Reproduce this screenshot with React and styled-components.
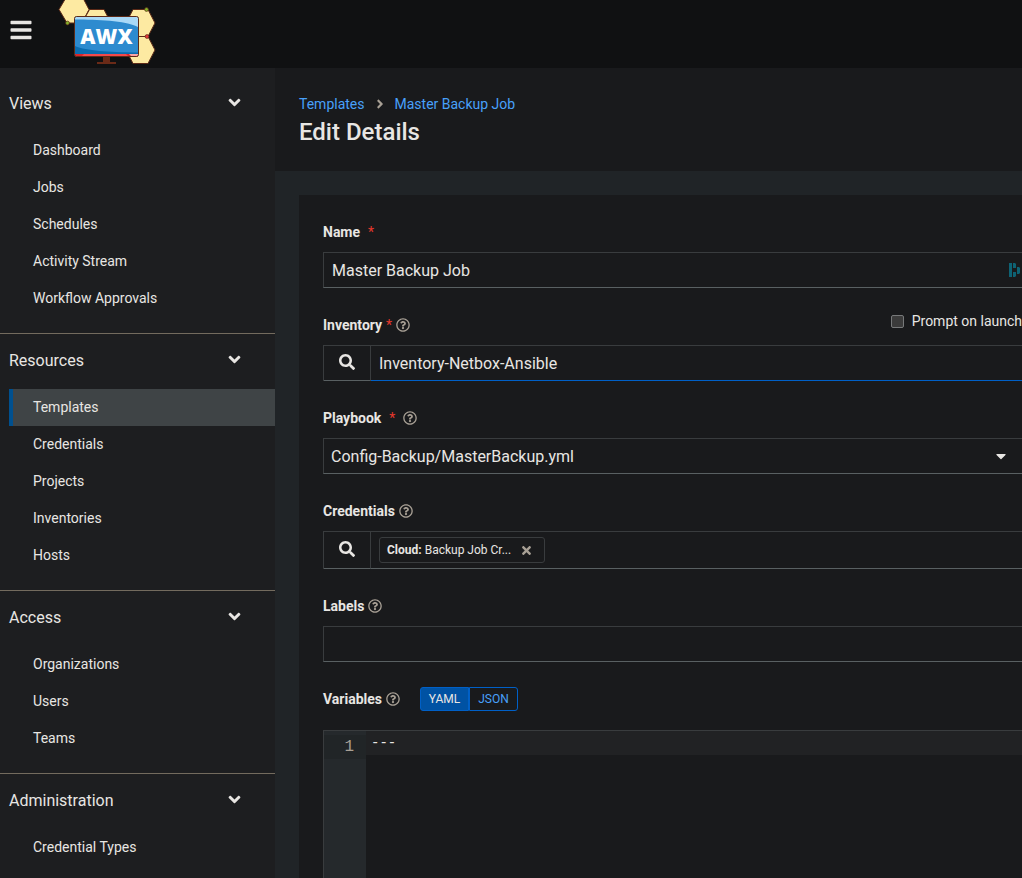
import styled, { createGlobalStyle, ThemeProvider } from "styled-components";
import {
  FaBars,
  FaAngleDown,
  FaAngleRight,
  FaSearch,
  FaRegQuestionCircle,
  FaCaretDown,
  FaTimes,
} from "react-icons/fa";

const theme = {
  colors: {
    header: "#101112",
    sidebar: "#1d1e20",
    panel: "#191a1c",
    page: "#202427",
    text: "#e8e6e3",
    muted: "#a8a095",
    link: "#48a0fa",
    primary: "#0060c7",
    primaryFill: "#0052a3",
    active: "#3f4446",
    activeBar: "#00508f",
    divider: "#736b5e",
    border: "#393c3e",
    borderBottom: "#596062",
    required: "#e5382c",
  },
};

const GlobalStyle = createGlobalStyle`
  * {
    box-sizing: border-box;
  }

  body {
    margin: 0;
    background-color: #202427;
    color: #e8e6e3;
    font-family: Roboto, sans-serif;
    font-size: 14px;
  }

  button, input, select, textarea {
    font-family: inherit;
    color: inherit;
  }
`;

const Page = styled.div`
  display: flex;
  flex-direction: column;
  height: 100vh;
  overflow: hidden;
`;

const Header = styled.header`
  display: flex;
  flex: none;
  align-items: center;
  gap: 17px;
  height: 68px;
  padding-left: 9px;
  background-color: ${({ theme }) => theme.colors.header};

  svg {
    display: block;
  }
`;

const MenuButton = styled.button`
  padding: 0;
  border: 0;
  background: none;
  font-size: 24px;
  line-height: 24px;
  cursor: pointer;

  svg {
    margin-bottom: 8px;
  }
`;

const Body = styled.div`
  display: flex;
  flex: 1;
  min-height: 0;
`;

const Sidebar = styled.nav`
  flex: none;
  width: 275px;
  padding-top: 9px;
  overflow: hidden;
  background-color: ${({ theme }) => theme.colors.sidebar};
`;

const NavSection = styled.section`
  padding: 0 0 16px 9px;
  border-bottom: 1px solid ${({ theme }) => theme.colors.divider};

  ul {
    margin: 0;
    padding: 0;
    list-style: none;
  }
`;

const NavToggle = styled.button`
  display: flex;
  align-items: center;
  justify-content: space-between;
  width: 100%;
  height: 55px;
  padding: 0 31px 2px 0;
  border: 0;
  background: none;
  font-size: 16px;
  cursor: pointer;

  svg {
    margin-bottom: 2px;
    font-size: 19px;
  }
`;

const NavLink = styled.a`
  display: block;
  height: 37px;
  padding-left: 20px;
  border-left: 4px solid ${({ theme, $active }) => ($active ? theme.colors.activeBar : "transparent")};
  background-color: ${({ theme, $active }) => ($active ? theme.colors.active : "transparent")};
  color: inherit;
  line-height: 36px;
  text-decoration: none;
`;

const Main = styled.main`
  display: flex;
  flex: 1;
  flex-direction: column;
  min-width: 0;
`;

const PageHead = styled.div`
  height: 103px;
  padding: 24px;
  background-color: ${({ theme }) => theme.colors.panel};

  h1 {
    margin: 0;
    font-size: 24px;
    font-weight: 500;
    line-height: 32px;
  }
`;

const Breadcrumb = styled.nav`
  display: flex;
  align-items: center;
  gap: 8px;
  line-height: 24px;

  a {
    color: ${({ theme }) => theme.colors.link};
    text-decoration: none;
  }

  svg {
    color: ${({ theme }) => theme.colors.muted};
  }
`;

const Card = styled.form`
  display: flex;
  flex: 1;
  flex-direction: column;
  gap: 25px;
  min-height: 0;
  margin: 24px 0 0 24px;
  padding: 25px 0 0 24px;
  background-color: ${({ theme }) => theme.colors.panel};
`;

const Group = styled.div`
  display: flex;
  flex: ${({ $grow }) => ($grow ? 1 : "none")};
  flex-direction: column;
  gap: ${({ $grow }) => ($grow ? 19 : 8)}px;
  min-height: 0;
`;

const LabelRow = styled.div`
  display: flex;
  align-items: center;
  gap: 4px;
  height: 24px;

  label {
    font-weight: 700;
  }
`;

const Required = styled.span`
  padding: 0 ${({ $tight }) => ($tight ? 0 : 4)}px;
  color: ${({ theme }) => theme.colors.required};
`;

const HelpButton = styled.button`
  display: flex;
  padding: 0;
  border: 0;
  background: none;
  color: ${({ theme }) => theme.colors.muted};
  font-size: 14px;
  cursor: pointer;
`;

const Prompt = styled.label`
  display: flex;
  align-self: flex-start;
  align-items: center;
  gap: 8px;
  margin-left: auto;
  line-height: 16px;

  && {
    font-weight: 400;
  }

  input {
    appearance: none;
    width: 13px;
    height: 13px;
    margin: 0;
    border: 1px solid #77797a;
    border-radius: 2px;
    background-color: #3b3b3b;
  }
`;

const Field = styled.div`
  display: flex;
  align-items: center;
  height: 36px;
  border: 1px solid ${({ theme }) => theme.colors.border};
  border-right: 0;
  border-bottom-color: ${({ theme }) => theme.colors.borderBottom};

  > svg {
    flex: none;
  }
`;

const TextInput = styled.input`
  flex: 1;
  align-self: stretch;
  min-width: 0;
  padding: 0 8px;
  border: 0;
  outline: 0;
  background: none;
  font-size: 16px;
`;

const LookupField = styled.div`
  display: flex;
  height: ${({ $tall }) => ($tall ? 38 : 36)}px;
  border: 1px solid ${({ theme }) => theme.colors.border};
  border-width: 1px 0 0 1px;
`;

const LookupValue = styled.div`
  display: flex;
  flex: 1;
  align-items: center;
  min-width: 0;
  border-bottom: 1px solid ${({ theme, $focused }) => ($focused ? theme.colors.primary : theme.colors.borderBottom)};
`;

const SearchButton = styled.button`
  display: flex;
  align-items: center;
  justify-content: center;
  width: 47px;
  padding: 0 0 2px;
  border: 1px solid ${({ theme }) => theme.colors.border};
  border-width: 0 1px 1px 0;
  border-bottom-color: ${({ theme }) => theme.colors.borderBottom};
  background: none;
  font-size: 16px;
  cursor: pointer;
`;

const Select = styled.select`
  appearance: none;
  flex: 1;
  align-self: stretch;
  padding: 0 7px;
  border: 0;
  background: none;
  font-size: 16px;
`;

const SelectCaret = styled(FaCaretDown)`
  margin-right: 13px;
  font-size: 16px;
`;

const Chip = styled.span`
  display: flex;
  align-items: center;
  gap: 9px;
  height: 26px;
  margin-left: 8px;
  padding: 0 11px 0 7px;
  border: 1px solid ${({ theme }) => theme.colors.border};
  border-radius: 3px;
  font-size: 12px;

  b {
    font-weight: 700;
  }

  button {
    display: flex;
    padding: 0;
    border: 0;
    background: none;
    color: ${({ theme }) => theme.colors.muted};
    font-size: 13px;
  }
`;

const Toggle = styled.div`
  display: flex;
  margin-left: 16px;
`;

const ToggleButton = styled.button`
  width: 49px;
  height: 24px;
  padding: 0;
  border: 1px solid ${({ theme }) => theme.colors.primary};
  border-radius: ${({ $selected }) => ($selected ? "3px 0 0 3px" : "0 3px 3px 0")};
  background-color: ${({ theme, $selected }) => ($selected ? theme.colors.primaryFill : "transparent")};
  color: ${({ theme, $selected }) => ($selected ? theme.colors.text : theme.colors.link)};
  font-size: 12px;
`;

const Editor = styled.div`
  display: flex;
  flex: 1;
  min-height: 0;
  border: 1px solid ${({ theme }) => theme.colors.border};
  border-width: 1px 0 0 1px;
  font-family: "Liberation Mono", monospace;

  textarea {
    flex: 1;
    padding: 0 5px;
    border: 0;
    outline: 0;
    resize: none;
    background: linear-gradient(#212224 24px, transparent 24px);
    font-family: inherit;
    font-size: 14px;
    line-height: 24px;
  }
`;

const Gutter = styled.div`
  width: 42px;
  padding-top: 4px;
  background-color: #25292c;

  span {
    display: block;
    padding-right: 12px;
    background-color: #212527;
    color: ${({ theme }) => theme.colors.muted};
    font-size: 16px;
    line-height: 24px;
    text-align: right;
  }
`;

const sections = [
  { title: "Views", items: ["Dashboard", "Jobs", "Schedules", "Activity Stream", "Workflow Approvals"] },
  { title: "Resources", items: ["Templates", "Credentials", "Projects", "Inventories", "Hosts"] },
  { title: "Access", items: ["Organizations", "Users", "Teams"] },
  { title: "Administration", items: ["Credential Types"] },
];

const Logo = () => (
  <svg width="110" height="68" viewBox="0 0 110 68" role="img" aria-label="AWX">
    <g fill="#fdeaa2" stroke="#5c2a17" strokeWidth="1">
      <path d="M9 9.5 17-4h15l7 13.5L32 23H17Z" />
      <path d="M32 23l7.500-13.500H54L61 23Z" />
      <path d="M76 23l7-13.500h15l7 13.500-7 13.500H83Z" />
      <path d="M76 50l7-13.500h15l7 13.500-7 13.500H83Z" />
    </g>
    <g stroke="#5c2a17" strokeWidth=".7">
      <circle cx="17.500" cy="23" r="1.900" fill="#86b52b" />
      <circle cx="96.500" cy="9.500" r="1.900" fill="#86b52b" />
      <circle cx="97" cy="36.500" r="1.900" fill="#e8383c" />
    </g>
    <path d="M53 57h7v5h6v2H47v-2h6Z" fill="#6a2a17" />
    <rect x="24.500" y="16.500" width="64" height="40" rx="2" fill="#2d8bcf" />
    <path d="M25 17h63v10C74 20 48 20 25 19.500Z" fill="#a9d9f7" />
    <path d="M25 46c12 5 32 6 63 6.500V55H25Z" fill="#0b6cae" />
    <path d="M25 54h63v2.500H25Z" fill="#d9252a" />
    <path d="M34 54h42l2 2H32Z" fill="#f4484a" />
    <path d="M79 54h9v2h-7Z" fill="#f9a3a4" />
    <rect x="24.500" y="16.500" width="64" height="40" rx="2" fill="none" stroke="#5c2a17" />
    <text x="56.500" y="44" textAnchor="middle" fill="#fff" fontFamily="Open Sans, sans-serif" fontWeight="800" fontSize="21">
      AWX
    </text>
  </svg>
);

const PasswordIcon = () => (
  <svg width="13" height="14" viewBox="0 0 13 14" fill="#0e6274" aria-hidden="true">
    <path d="M0 0h3v14H0ZM4 0h2l1 1v4H4ZM4 9h3v4l-1 1H4ZM8 4h2l1 1v5l-1 1H8Z" />
  </svg>
);

const Help = ({ name }) => (
  <HelpButton type="button" aria-label={`More information for ${name}`}>
    <FaRegQuestionCircle />
  </HelpButton>
);

const App = () => {
  return (
    <ThemeProvider theme={theme}>
      <GlobalStyle />
      <Page>
        <Header>
          <MenuButton aria-label="Global navigation">
            <FaBars />
          </MenuButton>
          <Logo />
        </Header>

        <Body>
          <Sidebar>
            {sections.map(({ title, items }) => (
              <NavSection key={title}>
                <NavToggle>
                  {title}
                  <FaAngleDown />
                </NavToggle>
                <ul>
                  {items.map((item) => (
                    <li key={item}>
                      <NavLink href="#" $active={item === "Templates"}>
                        {item}
                      </NavLink>
                    </li>
                  ))}
                </ul>
              </NavSection>
            ))}
          </Sidebar>

          <Main>
            <PageHead>
              <Breadcrumb>
                <a href="#">Templates</a>
                <FaAngleRight />
                <a href="#">Master Backup Job</a>
              </Breadcrumb>
              <h1>Edit Details</h1>
            </PageHead>

            <Card>
              <Group>
                <LabelRow>
                  <label htmlFor="name">Name</label>
                  <Required>*</Required>
                </LabelRow>
                <Field>
                  <TextInput id="name" type="text" defaultValue="Master Backup Job" />
                  <PasswordIcon />
                </Field>
              </Group>

              <Group>
                <LabelRow>
                  <label htmlFor="inventory">Inventory</label>
                  <Required $tight>*</Required>
                  <Help name="Inventory" />
                  <Prompt>
                    <input type="checkbox" />
                    Prompt on launch
                  </Prompt>
                </LabelRow>
                <LookupField>
                  <SearchButton type="button" aria-label="Search">
                    <FaSearch />
                  </SearchButton>
                  <LookupValue $focused>
                    <TextInput id="inventory" type="text" defaultValue="Inventory-Netbox-Ansible" />
                  </LookupValue>
                </LookupField>
              </Group>

              <Group>
                <LabelRow>
                  <label htmlFor="playbook">Playbook</label>
                  <Required>*</Required>
                  <Help name="Playbook" />
                </LabelRow>
                <Field>
                  <Select id="playbook">
                    <option>Config-Backup/MasterBackup.yml</option>
                  </Select>
                  <SelectCaret />
                </Field>
              </Group>

              <Group>
                <LabelRow>
                  <label htmlFor="credentials">Credentials</label>
                  <Help name="Credentials" />
                </LabelRow>
                <LookupField $tall>
                  <SearchButton type="button" id="credentials" aria-label="Search">
                    <FaSearch />
                  </SearchButton>
                  <LookupValue>
                    <Chip>
                      <span>
                        <b>Cloud:</b> Backup Job Cr...
                      </span>
                      <button type="button" aria-label="Remove">
                        <FaTimes />
                      </button>
                    </Chip>
                  </LookupValue>
                </LookupField>
              </Group>

              <Group>
                <LabelRow>
                  <label htmlFor="labels">Labels</label>
                  <Help name="Labels" />
                </LabelRow>
                <Field>
                  <TextInput id="labels" type="text" />
                </Field>
              </Group>

              <Group $grow>
                <LabelRow>
                  <label htmlFor="variables">Variables</label>
                  <Help name="Variables" />
                  <Toggle>
                    <ToggleButton type="button" $selected>
                      YAML
                    </ToggleButton>
                    <ToggleButton type="button">JSON</ToggleButton>
                  </Toggle>
                </LabelRow>
                <Editor>
                  <Gutter>
                    <span>1</span>
                  </Gutter>
                  <textarea id="variables" defaultValue="---" spellCheck="false" />
                </Editor>
              </Group>
            </Card>
          </Main>
        </Body>
      </Page>
    </ThemeProvider>
  );
};

export default App;
